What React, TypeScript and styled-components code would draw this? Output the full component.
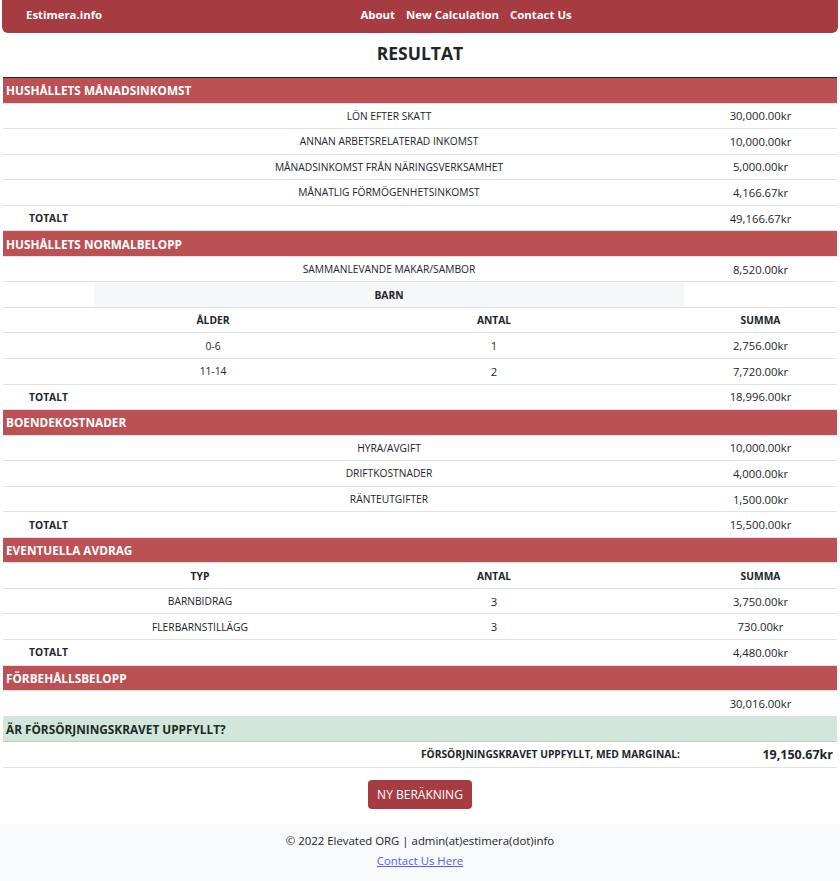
import React from "react";
import styled, { createGlobalStyle, css } from "styled-components";

const GlobalStyle = createGlobalStyle`
  html, body { margin: 0; padding: 0; background: #fff; }
  body { font-family: "Open Sans", "Noto Sans", sans-serif; color: #212529; }
  * { box-sizing: border-box; }
`;

const Nav = styled.nav`
  margin: 0 2px;
  height: 33px;
  background: #a63c41;
  border-radius: 0 0 6px 6px;
  display: flex;
  align-items: center;
  padding: 0 24px 5px 24px;
  color: #fff;
  font-weight: 700;
  font-size: 11.4px;
`;

const Brand = styled.span`
  margin-right: 16px;
`;

const NavLinks = styled.div`
  flex: 1;
  display: flex;
  justify-content: center;
  gap: 11px;
`;

const Title = styled.h1`
  margin: 0;
  height: 44px;
  display: flex;
  align-items: center;
  justify-content: center;
  font-size: 17.5px;
  font-weight: 700;
  padding-bottom: 4px;
`;

const Table = styled.div`
  margin: 0 3px;
  border-top: 1px solid #212529;
`;

const ROW_H = "25.56px";

const SectionHeader = styled.div<{ $variant?: "red" | "green" }>`
  height: ${ROW_H};
  display: flex;
  align-items: center;
  padding: 0 3px;
  font-weight: 700;
  font-size: 11.8px;
  border-bottom: 1px solid #dee2e6;
  ${(p) =>
    p.$variant === "green"
      ? css`
          background: #d3e6dc;
          color: #1b2a23;
          border-bottom-color: #bcd0c7;
        `
      : css`
          background: #bb5155;
          color: #fff;
        `}
`;

const Row = styled.div<{ $cols: string }>`
  height: ${ROW_H};
  display: grid;
  grid-template-columns: ${(p) => p.$cols};
  border-bottom: 1px solid #dee2e6;
  font-size: 10.25px;
`;

const Cell = styled.div<{ $span?: number; $bold?: boolean; $shade?: boolean; $align?: "left" | "center" | "right"; $size?: number }>`
  grid-column: span ${(p) => p.$span ?? 1};
  display: flex;
  align-items: center;
  justify-content: ${(p) =>
    p.$align === "right" ? "flex-end" : p.$align === "left" ? "flex-start" : "center"};
  padding: 0 4px;
  font-weight: ${(p) => (p.$bold ? 700 : 400)};
  ${(p) => p.$size && css`font-size: ${p.$size}px;`}
  ${(p) => p.$shade && css`background: #f6f7f9;`}
  white-space: nowrap;
`;

const Value = styled(Cell)`
  font-size: 11.3px;
`;

const MAIN = "91px 1fr 153px";
const KIDS = "420px 142px 1fr 153px";
const AVDRAG = "394px 194px 1fr 153px";

const ButtonWrap = styled.div`
  display: flex;
  justify-content: center;
  padding: 12px 0 15px;
`;

const Button = styled.button`
  background: #a63c41;
  color: #fff;
  border: none;
  border-radius: 4px;
  height: 29px;
  padding: 0 9px;
  white-space: nowrap;
  font-family: inherit;
  font-size: 12px;
  font-weight: 500;
  cursor: pointer;
`;

const Footer = styled.footer`
  background: #f8f9fa;
  height: 58px;
  display: flex;
  flex-direction: column;
  align-items: center;
  padding-top: 9px;
  gap: 5px;
  font-size: 11.4px;
  color: #212529;
`;

const FooterLink = styled.a`
  color: #5b5bf5;
  text-decoration: underline;
`;

type Line = [string, string];

const incomes: Line[] = [
  ["LÖN EFTER SKATT", "30,000.00kr"],
  ["ANNAN ARBETSRELATERAD INKOMST", "10,000.00kr"],
  ["MÅNADSINKOMST FRÅN NÄRINGSVERKSAMHET", "5,000.00kr"],
  ["MÅNATLIG FÖRMÖGENHETSINKOMST", "4,166.67kr"],
];

const housing: Line[] = [
  ["HYRA/AVGIFT", "10,000.00kr"],
  ["DRIFTKOSTNADER", "4,000.00kr"],
  ["RÄNTEUTGIFTER", "1,500.00kr"],
];

const MainRow = ({ label, value }: { label: string; value: string }) => (
  <Row $cols={MAIN}>
    <Cell />
    <Cell>{label}</Cell>
    <Value>{value}</Value>
  </Row>
);

const TotalRow = ({ value }: { value: string }) => (
  <Row $cols={MAIN}>
    <Cell $bold>TOTALT</Cell>
    <Cell />
    <Value>{value}</Value>
  </Row>
);

export default function App() {
  return (
    <>
      <GlobalStyle />
      <Nav>
        <Brand>Estimera.info</Brand>
        <NavLinks>
          <span>About</span>
          <span>New Calculation</span>
          <span>Contact Us</span>
        </NavLinks>
      </Nav>
      <Title>RESULTAT</Title>
      <Table>
        <SectionHeader>HUSHÅLLETS MÅNADSINKOMST</SectionHeader>
        {incomes.map(([l, v]) => (
          <MainRow key={l} label={l} value={v} />
        ))}
        <TotalRow value="49,166.67kr" />

        <SectionHeader>HUSHÅLLETS NORMALBELOPP</SectionHeader>
        <MainRow label="SAMMANLEVANDE MAKAR/SAMBOR" value="8,520.00kr" />
        <Row $cols={MAIN}>
          <Cell />
          <Cell $shade $bold>BARN</Cell>
          <Cell />
        </Row>
        <Row $cols={KIDS}>
          <Cell $bold>ÅLDER</Cell>
          <Cell $bold>ANTAL</Cell>
          <Cell />
          <Cell $bold>SUMMA</Cell>
        </Row>
        <Row $cols={KIDS}>
          <Cell>0-6</Cell>
          <Value>1</Value>
          <Cell />
          <Value>2,756.00kr</Value>
        </Row>
        <Row $cols={KIDS}>
          <Cell>11-14</Cell>
          <Value>2</Value>
          <Cell />
          <Value>7,720.00kr</Value>
        </Row>
        <TotalRow value="18,996.00kr" />

        <SectionHeader>BOENDEKOSTNADER</SectionHeader>
        {housing.map(([l, v]) => (
          <MainRow key={l} label={l} value={v} />
        ))}
        <TotalRow value="15,500.00kr" />

        <SectionHeader>EVENTUELLA AVDRAG</SectionHeader>
        <Row $cols={AVDRAG}>
          <Cell $bold>TYP</Cell>
          <Cell $bold>ANTAL</Cell>
          <Cell />
          <Cell $bold>SUMMA</Cell>
        </Row>
        <Row $cols={AVDRAG}>
          <Cell>BARNBIDRAG</Cell>
          <Value>3</Value>
          <Cell />
          <Value>3,750.00kr</Value>
        </Row>
        <Row $cols={AVDRAG}>
          <Cell>FLERBARNSTILLÄGG</Cell>
          <Value>3</Value>
          <Cell />
          <Value>730.00kr</Value>
        </Row>
        <TotalRow value="4,480.00kr" />

        <SectionHeader>FÖRBEHÅLLSBELOPP</SectionHeader>
        <MainRow label="" value="30,016.00kr" />

        <SectionHeader $variant="green">ÄR FÖRSÖRJNINGSKRAVET UPPFYLLT?</SectionHeader>
        <Row $cols={MAIN}>
          <Cell />
          <Cell $bold $align="right">FÖRSÖRJNINGSKRAVET UPPFYLLT, MED MARGINAL:</Cell>
          <Cell $bold $align="right" $size={12.5}>19,150.67kr</Cell>
        </Row>
      </Table>
      <ButtonWrap>
        <Button>NY BERÄKNING</Button>
      </ButtonWrap>
      <Footer>
        <span>© 2022 Elevated ORG | admin(at)estimera(dot)info</span>
        <FooterLink href="#">Contact Us Here</FooterLink>
      </Footer>
    </>
  );
}
